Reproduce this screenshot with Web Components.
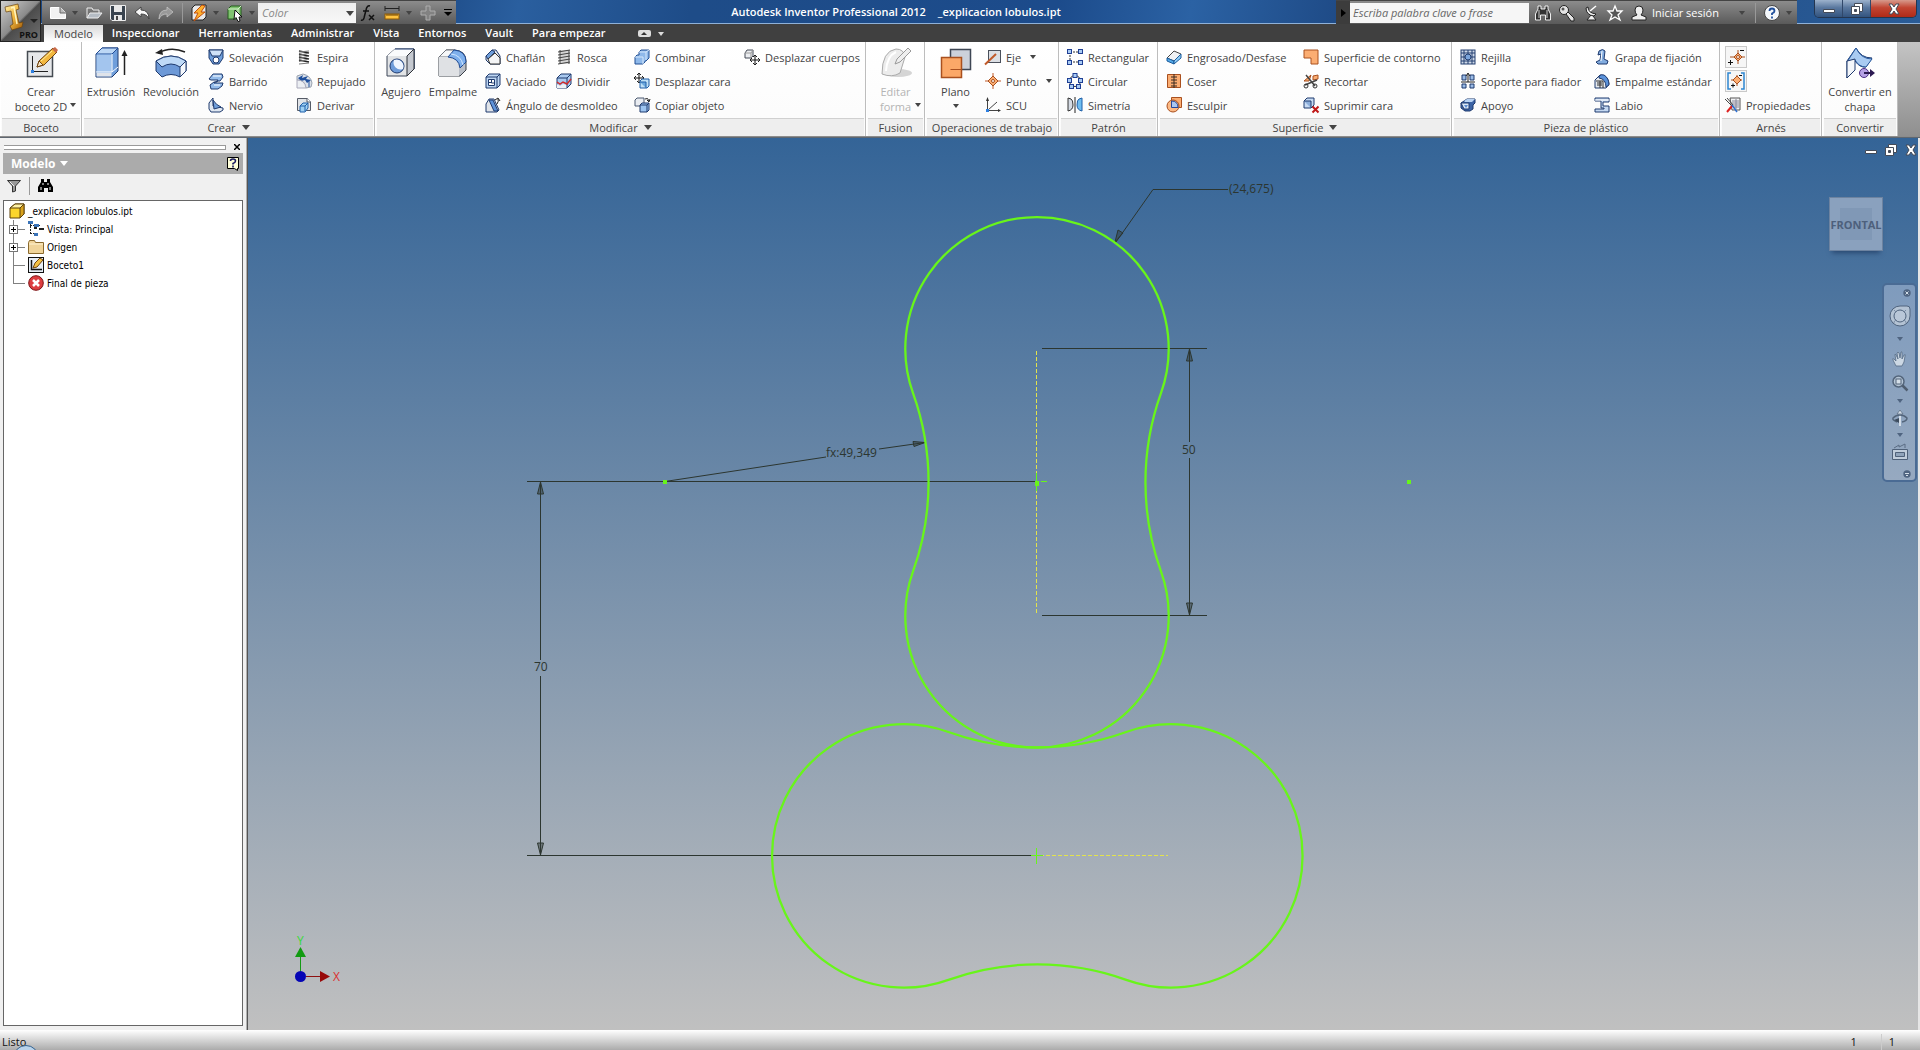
<!DOCTYPE html>
<html lang="es">
<head>
<meta charset="utf-8">
<title>Autodesk Inventor Professional 2012</title>
<style>
  html, body { height: 100%; margin: 0; }
  body { font: 11px/15px "Open Sans", "Noto Sans", sans-serif; color: #444; background: #f0f0f0; overflow: hidden; }
</style>
</head>
<body>
<inv-app></inv-app>
<script>
const B = 'stroke="#1f3a6e" stroke-linejoin="round"';
const O = 'fill="#fbad72" stroke="#a9501f" stroke-linejoin="round"';
const ARROW = 'fill="none" stroke="#222"';

/* name: [width, height, markup] */
const ICONS = {
  sketch: [32, 32, `<rect x="2.500" y="4.500" width="25" height="25" fill="#e6e8ea" stroke="#454b52" stroke-width="1.500"/><path d="M7.500 9v15.500H23" fill="none" stroke="#222"/><rect x="6" y="23" width="3" height="3" fill="#2d7fe0"/><path d="M12 20l2-6L28 1l4 4-13 13z" fill="#f2b83f" stroke="#6f4310"/><path d="M12 20l2-6 4 4z" fill="#f7e7c8" stroke="#6f4310"/><path d="M27 2l3-2 3 3-2 3z" fill="#c86b4a"/><path d="M16 14L27 4" stroke="#fff0a0"/>`],
  extrude: [32, 32, `<path d="M1 7l6-6h16v23l-6 6H1z" fill="#6f9edb" ${B}/><path d="M1 7l6-6h16l-6 6z" fill="#bcd7f5" stroke="#1f4a94"/><path d="M1.500 7.500h15v18h-15z" fill="#a3c5ee"/><path d="M17 7v18M1 25h16l6-5" fill="none" stroke="#fff"/><path d="M1.500 26h15v3.500h-15z" fill="#dfe3ea"/><path d="M29.500 28V6" stroke="#222" stroke-width="1.500"/><path d="M26.500 9l3-6 3 6z" fill="#222"/>`],
  revolve: [32, 32, `<path d="M3 6Q16-1 30 5" fill="none" stroke="#222" stroke-width="1.500"/><path d="M7 2L0 6l8 2z" fill="#222"/><path d="M1 14q15-10 30 0v10l-6 6q-9-5-18 0l-6-6z" fill="#6d99d7" ${B}/><path d="M1 14q15-10 30 0l-6 6q-9-6-18 0z" fill="#bfdaf7" ${B}/><path d="M25 20l6-6v10l-6 6z" fill="#f5f8fc" ${B}/>`],
  hole: [32, 32, `<path d="M2 9l8-7h19v20l-7 7H2z" fill="#e2e4e6" stroke="#3c4759" stroke-linejoin="round"/><path d="M2 9l8-7h19l-7 7z" fill="#fafbfc"/><path d="M10 2h19v20l-7 7" fill="none" ${B}/><path d="M22 9v20l7-7V2z" fill="#c5c9d0" stroke="#2d3138"/><circle cx="12" cy="19" r="7" fill="#6e9cda" ${B}/><path d="M9 13a7 7 0 0 0 9 9 7 7 0 0 0-9-9" fill="#eef5ff"/>`],
  fillet: [32, 32, `<path d="M2 10l7-7h9q11 1 11 11v9l-6 6H2z" fill="#b9bec6" stroke="#3b4048"/><path d="M2 10l7-7h9l-6 7z" fill="#f6f7f8" stroke="#70757d"/><path d="M2 10h10q10 1 10 11v8H2z" fill="#dfe1e4"/><path d="M11 10l6-7q12 1 12 12l-6 6q-1-10-12-11z" fill="#7fb0ec" stroke="#1f4a94"/><path d="M14 7q10 1 12 11" fill="none" stroke="#d0e6ff"/>`],
  form: [32, 32, `<ellipse cx="18" cy="26" rx="14" ry="4" fill="#d5d5d5"/><path d="M2 27Q2 4 16 2q8 0 9 8l-5 16q-8 5-18 1z" fill="#ececec" stroke="#aaa"/><path d="M6 24Q7 9 16 5" fill="none" stroke="#fff" stroke-width="2"/><path d="M15 17l2-5L28 1l3 3-11 11z" fill="#eee" stroke="#999"/>`],
  plane: [32, 32, `<rect x="10.500" y="2.500" width="20" height="20" fill="#ccd1da" stroke="#3e4654" stroke-width="1.500"/><rect x="1.500" y="10.500" width="20" height="20" fill="#fba868" stroke="#a9501f" stroke-width="1.500"/><path d="M10.500 22.500h11v-12" fill="none" stroke="#a9501f"/>`],
  convert: [32, 32, `<path d="M3 14L12 1q5 10 16 10l-6 9q-6 1-11-6l-8 17z" fill="#8db6e7" ${B}/><path d="M12 1q5 11 16 11l-6 8q-7 0-11-7-3 0-8 2z" fill="#a9cbf2" stroke="#2a5a9e"/><path d="M3 14l8-2v11l-8 8z" fill="#f4f7fb" ${B}/><circle cx="20" cy="26" r="4.500" fill="#b5a1e5" stroke="#4b2f86"/><path d="M20 26h7" stroke="#2c1a52" stroke-width="2"/><path d="M26 22l5 4-5 4z" fill="#2c1a52"/>`],

  loft: [16, 16, `<path d="M1 1h14v8l-4 6H5L1 9z" fill="#6f9fdb" ${B}/><path d="M1 1h14l-3 6H4z" fill="#cfe2f8" ${B}/><circle cx="8" cy="11" r="3" fill="#fff" ${B}/>`],
  sweep: [16, 16, `<path d="M1 6l4-5h9l1 3-3 4H9l-3 2 9 0-1 3-4 3H3l-1-4 4-3h3l1-2H3z" fill="#94bceb" ${B}/><path d="M5 3h8M6 12h6" stroke="#fff"/>`],
  rib: [16, 16, `<path d="M1 6l4-5v8l10 2v2l-3 2H3l-2-3z" fill="#dfe7f1" ${B}/><path d="M5 3q3 5 8 7l-7 2z" fill="#6f9fdb" ${B}/>`],
  coil: [16, 16, `<path d="M3 2l10 2M3 5l10 2M3 8l10 2M3 11l10 2" stroke="#222" stroke-width="1.500"/><path d="M3 3l10-1M3 6.500L13 4M3 9.500L13 7M3 12.500l10-2.500M3 15l10-1" stroke="#777"/>`],
  emboss: [16, 16, `<path d="M1 3l6-2q8 2 9 9l-1 4-5 1q-1-8-9-8z" fill="#dbe1e9" stroke="#9aa3b0"/><path d="M2 5l5-3-1 3 6-2-2 3 5 1-4 3-2-3-4 1-2-2z" fill="#1f4f9c"/><path d="M1 7q8 0 9 8H1z" fill="#eceff3" stroke="#aab"/><path d="M13 8v6" stroke="#1f4f9c"/>`],
  derive: [16, 16, `<path d="M1.500 1.500h10l3 3v9h-13z" fill="#e0e3e7" stroke="#555b66"/><path d="M11 1v4h4" fill="#fff" stroke="#555b66"/><path d="M4 9l3-3h5v5l-3 4H4z" fill="#9fd0f3" stroke="#1f5fa8"/><path d="M4 9h5v5M9 9l3-3" fill="none" stroke="#1f5fa8"/>`],
  chamfer: [16, 16, `<path d="M1 7l6-6h4l4 6v8H5L1 11z" fill="#e4e6e9" ${B}/><path d="M1 7l6-6 3 2-7 7z" fill="#6f9fdb" ${B}/><path d="M3 10l7-6 5 5v6H5z" fill="#f4f5f6" stroke="#333"/>`],
  shell: [16, 16, `<path d="M1 4l3-3h11v11l-3 3H1z" fill="#bcd5f2" ${B}/><path d="M1 4h11v11M12 4l3-3" fill="none" ${B}/><path d="M3.500 6.500h6v6h-6z" fill="#fff" ${B}/><path d="M6.500 7v3h3M4 9.500h3" fill="none" stroke="#1f3a6e"/>`],
  draft: [16, 16, `<path d="M1 7l3-5h5l5 11-2 2H1z" fill="#dfe3e9" ${B}/><path d="M4 3h4l5 11H9z" fill="#5f93d9" ${B}/><path d="M12 7q2-3 1-5M10 3l3-2 2 3" ${ARROW}/>`],
  thread: [16, 16, `<path d="M4 1h9v14H4z" fill="#d6d6d6"/><path d="M2 3l12-2M2 6l12-2M2 9l12-2M2 12l12-2M2 15l12-2M4 1v14M13 1v14" stroke="#444"/>`],
  split: [16, 16, `<path d="M1 5l4-4h10v10l-4 4H1z" fill="#a9c9ef" ${B}/><path d="M1 11l3 2 3-2 4 1v3H1z" fill="#eef2f6"/><path d="M1 5h10v10M11 5l4-4" fill="none" stroke="#1f3a6e"/><path d="M1 9l3 2 3-2 4 2 4-5" fill="none" stroke="#d12b2b" stroke-width="1.500"/>`],
  combine: [16, 16, `<path d="M5 3l2-2h8v8l-3 3h-1v1l-2 2H1V8l2-2h2z" fill="#8fb9ea" stroke="#214f93"/><path d="M5 3h7v8M12 3l3-2M1 8h8v7" fill="none" stroke="#d6e8fb"/>`],
  moveface: [16, 16, `<path d="M5 0v10M0 5h10" stroke="#111"/><path d="M3 2l2-2 2 2M3 8l2 2 2-2M2 3L0 5l2 2M8 3l2 2-2 2" ${ARROW}/><path d="M6 8l2-2h7v7l-2 2H6z" fill="#bfe0f6" stroke="#1f5fa8"/><path d="M6 9h6v6" fill="#6da9de" stroke="#1f5fa8"/>`],
  copyobj: [16, 16, `<path d="M1 3l2-2h7v6l-2 2H1z" fill="#e9ecf1" stroke="#4a5970"/><path d="M6 8l2-2h7v7l-2 2H6z" fill="#9cc4f0" ${B}/><path d="M6 8h7v7M13 8l2-2" fill="none" ${B}/><path d="M11 2q3-2 4 2M13 3l2 2 1-3" ${ARROW}/>`],
  movebody: [16, 16, `<path d="M1 4l2-3h6v6l-2 2H1z" fill="#eceef1" stroke="#444b57"/><path d="M1 4h6v5M7 4l2-3" fill="none" stroke="#999"/><path d="M11 6v10M6 11h10" stroke="#111"/><path d="M9 8l2-2 2 2M9 14l2 2 2-2M8 9l-2 2 2 2M14 9l2 2-2 2" ${ARROW}/>`],
  axis: [16, 16, `<rect x="3.500" y="1.500" width="12" height="12" fill="#dcdfe4" stroke="#4a505b"/><path d="M0 15.500L11 5" stroke="#c05a2a" stroke-width="2"/>`],
  point: [16, 16, `<path d="M8 0v16M0 8h16" stroke="#c05a2a"/><path d="M8 3l5 5-5 5-5-5z" ${O}/><circle cx="8" cy="8" r="1.500" fill="#fff" stroke="#a9501f"/>`],
  ucs: [16, 16, `<path d="M2.500 14V2M2 13.500h12M3 13L12 5" fill="none" stroke="#444"/><path d="M1 4l1.500-4L4 4zM13 12l3 1.500-3 1.500z" fill="#333"/><rect x="1" y="12" width="3" height="3" fill="#2d7fe0"/>`],
  rectpat: [16, 16, `<path d="M3 3h10M3 3v10M3 13h10" fill="none" stroke="#333" stroke-dasharray="2 1"/><g fill="#a9cbf4" stroke="#1f3f94"><rect x=".5" y=".5" width="4" height="4"/><rect x="11.500" y=".5" width="4" height="4"/><rect x=".5" y="11.500" width="4" height="4"/><rect x="11.500" y="11.500" width="4" height="4"/></g>`],
  circpat: [16, 16, `<circle cx="8" cy="8" r="5.500" fill="none" stroke="#333"/><g fill="#a9cbf4" stroke="#1f3f94"><rect x="6" y=".5" width="4" height="4"/><rect x=".5" y="5.500" width="4" height="4"/><rect x="11.500" y="5.500" width="4" height="4"/><rect x="2.500" y="11.500" width="4" height="4"/><rect x="9.500" y="11.500" width="4" height="4"/></g>`],
  mirror: [16, 16, `<path d="M1 1l3 1q2 1 2 6t-5 6z" fill="#d5dbe4" stroke="#333"/><path d="M15 1l-3 1q-2 1-2 6t5 6z" fill="#6fbdf0" stroke="#1f5fa8"/><path d="M8 0v16" stroke="#222"/>`],
  thicken: [16, 16, `<path d="M1 9l7-7 7 3-7 7z" fill="#f0f2f4" stroke="#444"/><path d="M1 9l7 3v3l-7-3z" fill="#53a9e8" stroke="#1d5c9c"/><path d="M8 12l7-7v4l-7 6z" fill="#8fcdf5" stroke="#1d5c9c"/>`],
  stitch: [16, 16, `<rect x="1.500" y="1.500" width="13" height="13" ${O}/><path d="M8 1v14M5 4h6M5 7h6M5 10h6M5 13h6" stroke="#3a2a20"/>`],
  sculpt: [16, 16, `<rect x="5.500" y=".5" width="10" height="10" ${O}/><circle cx="7" cy="9" r="6" fill="#fcb985" stroke="#a9501f"/><path d="M5.500 4v6.500H12Q12 4 5.500 4z" fill="#a9c6f2" stroke="#24479c"/>`],
  boundary: [16, 16, `<path d="M1 1h14v14H8V9H1z" ${O}/>`],
  trim: [16, 16, `<path d="M1 8l7-6-2 6zM10 3l5-1v4l-5 1z" ${O}/><path d="M3 2l9 11M14 7L2 12" stroke="#444" stroke-width="1.500"/><circle cx="3" cy="13" r="2" fill="none" stroke="#333"/><circle cx="12" cy="13" r="2" fill="none" stroke="#333"/>`],
  delface: [16, 16, `<path d="M1 4l3-3h7v7l-3 3H1z" fill="#c7dbf3" ${B}/><path d="M1 4h7v7" fill="#8caedb" ${B}/><path d="M9.500 9.500l6 6M15.500 9.500l-6 6" stroke="#c01818" stroke-width="2"/>`],
  grill: [16, 16, `<rect x="1" y="1" width="14" height="14" fill="#cfd9e8" stroke="#233e70"/><path d="M1 4h14M1 8h14M1 12h14M4 1v14M8 1v14M12 1v14" stroke="#233e70"/><circle cx="8" cy="8" r="3" fill="#7ba5dc" stroke="#233e70"/>`],
  boss: [16, 16, `<path d="M2 2h4v5H2zM10 2h4v5h-4zM2 11h4v4H2zM10 11h4v4h-4z" fill="#9abbe6" ${B}/><path d="M8 1v8M6 3l2-3 2 3M1 9h14" fill="none" stroke="#222"/>`],
  rest: [16, 16, `<path d="M4 4l3-2h8v4l-2 2v4l-3 2H5L1 11V6z" fill="#3c64a6" ${B}/><path d="M4 4l3-2h8l-3 3H5z" fill="#b8d2f2"/><path d="M1 6h8v6H4z" fill="#dbe8f7" ${B}/><path d="M4 8h4l-2 3z" fill="#5b8bd0"/>`],
  snap: [16, 16, `<path d="M5 2q4-3 6 0l-1 8 4 2-1 3H4l-2-2 4-2 1-6-3 1z" fill="#82acdf" ${B}/><path d="M8 2l-1 10" stroke="#fff"/>`],
  rule: [16, 16, `<path d="M1 7l5-5q8 0 9 9l-3 4H1z" fill="#e7ebf0" ${B}/><path d="M5 3q2-2 5-1 5 3 5 10l-3 2q0-8-7-9z" fill="#5b93db" ${B}/><path d="M2 8h7v7M3 10h5M3 12h5M6 8v7" fill="none" stroke="#333"/>`],
  lip: [16, 16, `<path d="M1 1h14v4H9v4h6v6H1v-3h9v-1H7V4H1z" fill="#c4d8f1" ${B}/><path d="M1 3h14" stroke="#fff"/>`],
  pinadd: [18, 18, `<path d="M11 2v14M3 9h15" stroke="#a9501f"/><path d="M11 5l4 4-4 4-4-4z" ${O}/><circle cx="11" cy="9" r="1.500" fill="#fff" stroke="#a9501f"/><path d="M1 14.500h5M3.500 12v5M13 2.500h4" stroke="#111"/>`],
  pingroup: [18, 18, `<path d="M4 1H1v16h3M14 1h3v16h-3" fill="none" stroke="#2e86d1" stroke-width="1.500"/><path d="M10 3v11M4 8h11" stroke="#a9501f"/><path d="M10 4l4 4-4 4-4-4z" ${O}/><path d="M4 13.500h4M6 11.500v4M12 3.500h3" stroke="#111"/>`],
  props: [16, 16, `<path d="M5 1h10v12H7z" fill="#f2f3f5" stroke="#555"/><path d="M7 4h7M7 6h7M8 8h6M9 10h5M11 2v10" stroke="#889"/><path d="M0 2l9 9M2 1l6 7" stroke="#444"/><path d="M2 15l5-6" stroke="#d22" stroke-width="2"/><path d="M7 8l5 7" stroke="#2d6fd0" stroke-width="1.500"/>`],

  logo: [39, 40, `<defs><linearGradient id="g" x1="0" y1="0" x2="1" y2="1"><stop offset="0" stop-color="#fff0a8"/><stop offset=".5" stop-color="#f0b53c"/><stop offset="1" stop-color="#a05a08"/></linearGradient></defs><path d="M4 6l13-3 1 5-3 1 3 13 4-1-1 5-10 3-2-4 3-2-2-13-5 1z" fill="url(#g)" stroke="#6a4310" stroke-width=".7"/><path d="M10 7l3-1 3 17" fill="none" stroke="#fff5bf" stroke-width="1.500"/><path d="M29 18h8l-4 4z" fill="#222"/>`],
  new: [16, 16, `<path d="M.5 2.500h10l5 5v6H.500z" fill="#f2f2f2" stroke="#fff"/><path d="M10 2v6h6" fill="#bbb" stroke="#666"/>`],
  open: [16, 16, `<path d="M1 13V3h5l1 2h6v3" fill="none" stroke="#eee"/><path d="M1 13L4 8h12l-4 5z" fill="#b5bcc4" stroke="#eee"/>`],
  save: [16, 16, `<path d="M.5.500h15v15H2l-1.500-1.500z" fill="#39434e" stroke="#eee"/><path d="M4 1h8v6H4zM4 10h8v5H4z" fill="#e8e8e8"/><path d="M6 11h2v4H6z" fill="#444"/>`],
  undo: [16, 16, `<path d="M1 7l6-5v3q8 0 8 9-2-5-8-5v3z" fill="#f7f7f7" stroke="#444"/>`],
  redo: [16, 16, `<path d="M15 7L9 2v3q-8 0-8 9 2-5 8-5v3z" fill="#999" stroke="#ccc" stroke-width=".7"/>`],
  update: [16, 16, `<path d="M1 3l3-3h11v12l-3 3H1z" fill="#e9e9e9" stroke="#222"/><path d="M11 0L3 8h4l-4 8L14 7h-4l4-6z" fill="#ffb02e" stroke="#c2500c"/>`],
  select: [16, 16, `<path d="M1 4l3-3h10v10l-3 3H1z" fill="#7fc36f" stroke="#245c1c"/><path d="M1 4h10v10M11 4l3-3" fill="none" stroke="#d8f2d0"/><path d="M8 5l7 7h-3l1 4-2 .5-2-4-2 2z" fill="#fff" stroke="#111"/>`],
  fx: [16, 16, `<path d="M10 1q-3-1-4 4L4 13q-1 3-3 2M3 6h6" fill="none" stroke="#111" stroke-width="1.500"/><path d="M9 10l5 5M14 10l-5 5" stroke="#111" stroke-width="1.500"/>`],
  measure: [16, 16, `<path d="M1 1v5M15 1v5M1 3.500h14" stroke="#222" fill="none"/><rect x="1" y="9" width="14" height="5" fill="#ffc340" stroke="#8d5a06"/><path d="M3 9v2M5 9v2M7 9v2M9 9v2M11 9v2M13 9v2" stroke="#6a4000"/>`],
  plus: [16, 16, `<path d="M6 1h4v5h5v4h-5v5H6v-5H1V6h5z" fill="#828282" stroke="#adadad"/>`],
  custom: [8, 8, `<path d="M0 0h8v1H0zM0 3h8L4 7z" fill="#000"/>`],
  binoculars: [16, 16, `<path d="M3 1h3v3h4V1h3v3l2.500 5v6h-5v-5h-5v5h-5V9L3 4z" fill="#333" stroke="#fff" stroke-width=".9"/><path d="M4 5v8M12 5v8" stroke="#ccc"/>`],
  find: [16, 16, `<path d="M3 1h3v3h3V1h3v3l3 5v5h-5v-4H6v4H0V9l3-5z" fill="#000"/><path d="M3 9v3M12 9v3M5 5v2M10 5v2" stroke="#fff"/>`],
  key: [16, 16, `<circle cx="5" cy="5" r="4.500" fill="#e4e4e4" stroke="#222"/><path d="M7 9l2-2 6 6v3h-3z" fill="#e4e4e4" stroke="#222"/><circle cx="4" cy="4" r="1.500" fill="#555"/>`],
  satellite: [16, 16, `<path d="M3 3q0 7 8 8l2-2Q5 8 5 2zM8 10l-4 5h9l-3-4" fill="#eee" stroke="#222"/><path d="M7 6l6-5" stroke="#fff" stroke-width="1.500"/>`],
  star: [16, 16, `<path d="M8 1l2 5h5l-4 4 2 5-5-3-5 3 2-5-4-4h5z" fill="#555" stroke="#fff" stroke-width="1.300"/>`],
  user: [16, 16, `<path d="M8 1q4 0 4 4 0 3-2 5l5 2v3H1v-3l5-2Q4 8 4 5q0-4 4-4z" fill="#eee" stroke="#222"/>`],
  help: [16, 16, `<circle cx="8" cy="8" r="7.500" fill="#f4f7fb" stroke="#444"/><path d="M5.500 6q0-2.500 2.500-2.500T10.500 6Q10.500 7.500 8 8.500V10M8 11.500v2" fill="none" stroke="#1f4f9c" stroke-width="1.800"/>`],
  qmark: [14, 15, `<path d="M1.500 1.500h11v11h-1v2l-3-2h-7z" fill="#ffffd8" stroke="#000"/><path d="M4.500 5q0-2 2.500-2t2.500 2Q9.500 6.500 7 7.500V8.500M7 9.500v2" fill="none" stroke="#1a1a60" stroke-width="1.600"/>`],
  funnel: [14, 14, `<path d="M.5 1.500h13L8.500 7v5l-3 1V7z" fill="#999" stroke="#333"/><path d="M3 3l4 4" stroke="#eee"/>`],
  part: [16, 16, `<path d="M1 5l5-4h9v10l-4 4H1z" fill="#fbd52c" stroke="#5e430b"/><path d="M1 5l5-4h9l-4 4z" fill="#fff2a5" stroke="#5e430b"/><path d="M11 5v10l4-4V1z" fill="#d9a21c" stroke="#5e430b"/>`],
  view: [16, 16, `<path d="M2.500 2v11M2 4.500h4M2 12.500h5M10 4.500h3" stroke="#222" stroke-dasharray="2 1"/><path d="M0 0h5v3H0zM6 3h5v3H6zM6 12h4v3H6z" fill="#3a73b8"/><path d="M11 7h5v2h-5zM6 6h3v2H6z" fill="#222"/>`],
  folder: [16, 16, `<path d="M.5 3.500l1-2h5l1 2h8v11H.500z" fill="#f0d49a" stroke="#8b6a2e"/><path d="M1 5h14" stroke="#fff3d2"/>`],
  sketchnode: [16, 16, `<rect x=".5" y=".5" width="15" height="15" fill="#e7eef6" stroke="#111"/><path d="M3.500 3v9.500H14" fill="none" stroke="#111" stroke-width="1.500"/><path d="M5 11l2-5 5-5 3 2-6 7z" fill="#f4c042" stroke="#6f4310"/>`],
  end: [16, 16, `<circle cx="8" cy="8" r="7.300" fill="#dc3d40" stroke="#7c1214"/><path d="M5 5l6 6M11 5l-6 6" stroke="#fff" stroke-width="2.500"/>`],

  wheel: [22, 22, `<path d="M1 11A10 10 0 0 1 11 1h7q3 0 3 3v7A10 10 0 0 1 1 11z" fill="#b4c3d4" stroke="#50647e"/><path d="M7 15q-3 2-2 3M15 15q3 2 2 3M7 7L5 5M15 7l2-2" fill="none" stroke="#7b8da5"/><circle cx="11" cy="11" r="6" fill="#b9c7d8" stroke="#50647e"/>`],
  hand: [16, 16, `<path d="M4 15L1 9q-1-2 1-1l2 2-1-6q0-2 1 0l2 4-1-6q1-2 2 0l1 5 1-6q1-1 1 1v6l2-4q2-1 1 1l-1 6-2 4z" fill="#ccd8e4" stroke="#566b84" stroke-width=".8"/>`],
  zoom: [16, 16, `<circle cx="6.500" cy="6.500" r="5.500" fill="#b5c5d5" stroke="#53657b" stroke-width="1.500"/><rect x="4" y="4" width="5" height="5" fill="#d5dfe8" stroke="#53657b"/><path d="M10.500 10.500l5 5" stroke="#4f5e70" stroke-width="2.500"/>`],
  orbit: [16, 16, `<path d="M8 16V3" stroke="#d3dde8" stroke-width="2"/><path d="M5 4l3-4 3 4z" fill="#d3dde8" stroke="#53657b" stroke-width=".7"/><path d="M5 12Q0 10 1 8q3-3 7-3t7 3q0 3-5 4" fill="none" stroke="#53657b" stroke-width="1.500"/><path d="M2 10l5-2v5z" fill="#3d4c5e"/>`],
  camera: [16, 16, `<path d="M.5 5.500h15v10H.500z" fill="#c0cddb" stroke="#4f6179"/><path d="M3.500 8.500h9v4h-9z" fill="#8fa3ba" stroke="#4f6179"/><path d="M2 4l5-3v2l6-3v4" fill="none" stroke="#5b6d84"/>`],
  dotx: [8, 8, `<circle cx="4" cy="4" r="3.700" fill="#4f6480"/><path d="M2.500 2.500l3 3M5.500 2.500l-3 3" stroke="#d5dfe8"/>`],
  dotmenu: [8, 8, `<circle cx="4" cy="4" r="3.700" fill="#4f6480"/><path d="M2 3.500h4M3 5.500h2" stroke="#d5dfe8"/>`],
  wmin: [12, 12, `<path d="M.5 6.500h11v3H.500z" fill="#fff" stroke="#444b58"/>`],
  wmax: [12, 12, `<path d="M3.500.5h8v8h-8z" fill="#fff" stroke="#444b58"/><path d="M.5 3.500h8v8h-8z" fill="#fff" stroke="#444b58"/><path d="M3.500 6.500h2v2h-2z" fill="#444b58" stroke="#444b58"/>`],
  wclose: [12, 12, `<path d="M1 1h3l2 3 2-3h3L8 6l3 5H8L6 8l-2 3H1l3-5z" fill="#fff" stroke="#444b58"/>`]
};

function define(name, css, html) {
  customElements.define(name, class extends HTMLElement {
    constructor() {
      super();
      this.attachShadow({ mode: 'open' });
    }
    connectedCallback() {
      if (this.shadowRoot.childNodes.length) return;
      const markup = typeof html === 'function' ? html(this) : html;
      this.shadowRoot.innerHTML = `<style>${css}</style>${markup}`;
    }
  });
}

define('inv-icon', ':host{display:inline-flex;flex:none} svg{display:block;overflow:visible}', el => {
  const [w, h, body] = ICONS[el.getAttribute('name')];
  return `<svg width="${w}" height="${h}" viewBox="0 0 ${w} ${h}" aria-hidden="true">${body}</svg>`;
});

define('inv-caret', `
  :host{display:inline-block;flex:none;width:0;height:0;border:3px solid transparent;border-top:4px solid var(--caret,#444);border-bottom:0}
  :host([large]){border-width:5px 4px 0}`, '');

/* Ribbon command: small row (icon beside text) or large (icon above text) */
define('inv-command', `
  :host{display:flex}
  button{all:unset;display:flex;align-items:center;gap:5px;height:24px;white-space:nowrap;color:#444}
  :host([large]){justify-content:center}
  :host([large]) button{flex-direction:column;gap:5px;height:auto;text-align:center;position:relative}
  :host([disabled]) button{color:#b4b4b4}
  .menu{margin-left:4px}
  :host([large][wrap]) .menu{position:absolute;right:-9px;bottom:11px}
  :host([large]:not([wrap])) .menu{margin:0}
  :host([toggle]) button{box-sizing:border-box;width:22px;height:22px;margin:1px 0;justify-content:center;border:1px solid #c9c9c9;background:#f6f6f6}
`, el => `<button type="button" ${el.hasAttribute('toggle') ? `aria-label="${el.getAttribute('toggle')}"` : ''}><inv-icon name="${el.getAttribute('icon')}"></inv-icon>${el.hasAttribute('toggle') ? '' : '<span><slot></slot></span>'}${el.hasAttribute('menu') ? '<inv-caret class="menu"></inv-caret>' : ''}</button>`);

define('inv-panel', `
  :host{display:flex;flex-direction:column;box-sizing:border-box;border-right:1px solid #bdbdbd;border-left:1px solid #fff;background:linear-gradient(#fff,#fbfbfb)}
  .body{display:flex;height:76px;padding:3px 0 0;box-sizing:border-box}
  footer{display:flex;align-items:center;justify-content:center;gap:6px;height:17px;border-top:1px solid #d0d0d0;background:#eeeeee;margin:0 1px;white-space:nowrap}
`, el => `<div class="body"><slot></slot></div><footer>${el.getAttribute('label')}${el.hasAttribute('menu') ? '<inv-caret large></inv-caret>' : ''}</footer>`);

define('inv-ribbon', `
  :host{display:flex;height:94px;background:linear-gradient(#c4c4c4,#8f8f8f);border-bottom:1px solid #8c8c8c}
  .col{display:flex;flex-direction:column}
  .sub{display:grid;grid-template-columns:71px auto}
  .big{margin-top:2px}
  .boceto{width:82px}.crear{width:293px}.modificar{width:491px}.fusion{width:59px}.trabajo{width:134px}
  .patron{width:99px}.superficie{width:294px}.pieza{width:268px}.arnes{width:102px}.convertir{width:76px}
`, `
  <inv-panel class="boceto" label="Boceto"><inv-command class="big" style="width:80px" large wrap menu icon="sketch">Crear<br>boceto 2D</inv-command></inv-panel>
  <inv-panel class="crear" label="Crear" menu>
    <inv-command class="big" style="width:56px" large icon="extrude">Extrusión</inv-command>
    <inv-command class="big" style="width:64px" large icon="revolve">Revolución</inv-command>
    <div class="col" style="width:88px;padding-left:5px"><inv-command icon="loft">Solevación</inv-command><inv-command icon="sweep">Barrido</inv-command><inv-command icon="rib">Nervio</inv-command></div>
    <div class="col"><inv-command icon="coil">Espira</inv-command><inv-command icon="emboss">Repujado</inv-command><inv-command icon="derive">Derivar</inv-command></div>
  </inv-panel>
  <inv-panel class="modificar" label="Modificar" menu>
    <inv-command class="big" style="width:50px" large icon="hole">Agujero</inv-command>
    <inv-command class="big" style="width:54px" large icon="fillet">Empalme</inv-command>
    <div class="col" style="width:149px;padding-left:5px"><div class="sub"><inv-command icon="chamfer">Chaflán</inv-command><inv-command icon="thread">Rosca</inv-command><inv-command icon="shell">Vaciado</inv-command><inv-command icon="split">Dividir</inv-command></div><inv-command icon="draft">Ángulo de desmoldeo</inv-command></div>
    <div class="col" style="width:110px"><inv-command icon="combine">Combinar</inv-command><inv-command icon="moveface">Desplazar cara</inv-command><inv-command icon="copyobj">Copiar objeto</inv-command></div>
    <div class="col"><inv-command icon="movebody">Desplazar cuerpos</inv-command></div>
  </inv-panel>
  <inv-panel class="fusion" label="Fusion"><inv-command class="big" style="width:57px" large wrap disabled menu icon="form">Editar<br>forma</inv-command></inv-panel>
  <inv-panel class="trabajo" label="Operaciones de trabajo">
    <inv-command class="big" style="width:59px" large menu icon="plane">Plano</inv-command>
    <div class="col"><inv-command menu icon="axis">Eje</inv-command><inv-command menu icon="point">Punto</inv-command><inv-command icon="ucs">SCU</inv-command></div>
  </inv-panel>
  <inv-panel class="patron" label="Patrón"><div class="col" style="padding-left:7px"><inv-command icon="rectpat">Rectangular</inv-command><inv-command icon="circpat">Circular</inv-command><inv-command icon="mirror">Simetría</inv-command></div></inv-panel>
  <inv-panel class="superficie" label="Superficie" menu>
    <div class="col" style="width:137px;padding-left:7px"><inv-command icon="thicken">Engrosado/Desfase</inv-command><inv-command icon="stitch">Coser</inv-command><inv-command icon="sculpt">Esculpir</inv-command></div>
    <div class="col"><inv-command icon="boundary">Superficie de contorno</inv-command><inv-command icon="trim">Recortar</inv-command><inv-command icon="delface">Suprimir cara</inv-command></div>
  </inv-panel>
  <inv-panel class="pieza" label="Pieza de plástico">
    <div class="col" style="width:134px;padding-left:7px"><inv-command icon="grill">Rejilla</inv-command><inv-command icon="boss">Soporte para fiador</inv-command><inv-command icon="rest">Apoyo</inv-command></div>
    <div class="col"><inv-command icon="snap">Grapa de fijación</inv-command><inv-command icon="rule">Empalme estándar</inv-command><inv-command icon="lip">Labio</inv-command></div>
  </inv-panel>
  <inv-panel class="arnes" label="Arnés"><div class="col" style="padding-left:4px"><inv-command toggle="Colocar pasador" icon="pinadd"></inv-command><inv-command toggle="Colocar grupo de pasadores" icon="pingroup"></inv-command><inv-command icon="props">Propiedades</inv-command></div></inv-panel>
  <inv-panel class="convertir" label="Convertir"><inv-command class="big" style="width:74px" large icon="convert">Convertir en<br>chapa</inv-command></inv-panel>
`);

define('inv-tabs', `
  :host{display:flex;height:18px;padding-left:44px;background:#404040}
  button{all:unset;padding:0 10px 0 9px;line-height:18px;color:#fff;font-weight:600;white-space:nowrap}
  button[aria-selected=true]{background:linear-gradient(#d9d9d9,#fff);color:#444;margin:1px 0 0;padding:0 10px;line-height:17px;font-weight:400}
  .pill{display:flex;align-items:center;justify-content:center;padding:0;width:13px;height:7px;margin:6px 7px 0 22px;border-radius:2px;background:#dedede}
  .pill i{border:3px solid transparent;border-bottom:3px solid #333;border-top:0}
  inv-caret{--caret:#ddd;margin-top:8px}
  div{display:flex}
`, `<div role="tablist">${['Modelo', 'Inspeccionar', 'Herramientas', 'Administrar', 'Vista', 'Entornos', 'Vault', 'Para empezar'].map((t, i) => `<button type="button" role="tab" aria-selected="${i === 0}">${t}</button>`).join('')}</div><button class="pill" type="button" aria-label="Minimizar cinta"><i></i></button><inv-caret></inv-caret>`);

define('inv-titlebar', `
  :host{display:flex;align-items:flex-start;height:24px;box-sizing:border-box;color:#fff;border-bottom:1px solid #8fb1d8;background:linear-gradient(100deg,#1d4a86 22%,#2a5f9f 27%,#1e4c88 36%,#1c4b8b 55%,#2b62a4 62%,#1b447e 72%,#2a5c97)}
  button{all:unset;display:flex}
  .app{box-sizing:border-box;position:relative;z-index:1;width:41px;height:42px;margin-right:1px;background:linear-gradient(135deg,#d0d0d0,#8a8a8a 48%,#4c4c4c 52%,#707070);border:1px solid #222}
  .app span{position:absolute;right:2px;bottom:0;font-size:9px;line-height:13px;color:#111;font-weight:700}
  .bar{display:flex;align-items:center;height:24px;box-sizing:border-box;background:linear-gradient(#8c8c8c,#5a5a5a);border-top:1px solid #444}
  .qat{box-sizing:border-box;padding:0 4px 0 8px;gap:8px;width:414px}
  .qat button{align-items:center;gap:6px}
  .sep{width:1px;height:20px;background:#999}
  select{appearance:none;font:italic 11px "Open Sans",sans-serif;color:#888;width:98px;height:20px;border:0;border-radius:0;padding:0 4px;background:linear-gradient(#eee,#f8f8f8);margin:0}
  .combo{position:relative;display:flex;margin:0 -4px 0 -5px}
  .combo inv-caret{position:absolute;right:2px;top:8px}
  h1{flex:1;margin:0;font-size:11px;font-weight:600;line-height:23px;display:flex;justify-content:center;gap:12px;white-space:nowrap}
  .info{width:461px}
  .toggle{width:14px;height:23px;align-items:center;justify-content:center;background:#3c3c3c}
  .toggle i{border:4px solid transparent;border-left:5px solid #000;border-right:0}
  input{box-sizing:border-box;width:179px;height:20px;border:0;padding:0 3px;background:#f6f6f6;font:italic 11px "Open Sans",sans-serif;color:#666;margin-right:6px}
  input::placeholder{color:#666;opacity:1}
  .icons{display:flex;gap:8px;align-items:center}
  .sign{gap:5px;margin-left:8px;align-items:center;white-space:nowrap}
  .win{display:flex;width:103px;height:18px;margin:0 3px 0 17px;border:1px solid #243650;border-top:0;border-radius:0 0 5px 5px;overflow:hidden;box-sizing:border-box}
  .win button{flex:28;justify-content:center;align-items:center;border-right:1px solid #31486a;background:linear-gradient(#9db2cc,#5a789f 45%,#33547f)}
  .win .x{flex:46;border:0;background:linear-gradient(#d79a8c,#c24532 45%,#b02a17)}
`, `
  <button class="app" type="button" aria-label="Menú de la aplicación"><inv-icon name="logo"></inv-icon><span>PRO</span></button>
  <div class="bar qat">
    <button type="button" aria-label="Nuevo"><inv-icon name="new"></inv-icon><inv-caret></inv-caret></button>
    <button type="button" aria-label="Abrir"><inv-icon name="open"></inv-icon></button>
    <button type="button" aria-label="Guardar"><inv-icon name="save"></inv-icon></button>
    <button type="button" aria-label="Deshacer"><inv-icon name="undo"></inv-icon></button>
    <button type="button" aria-label="Rehacer"><inv-icon name="redo"></inv-icon></button>
    <span class="sep"></span>
    <button type="button" aria-label="Actualizar"><inv-icon name="update"></inv-icon><inv-caret></inv-caret></button>
    <button type="button" aria-label="Seleccionar"><inv-icon name="select"></inv-icon><inv-caret></inv-caret></button>
    <span class="combo"><select aria-label="Color"><option>Color</option></select><inv-caret large></inv-caret></span>
    <button type="button" aria-label="Parámetros"><inv-icon name="fx"></inv-icon></button>
    <button type="button" aria-label="Medir"><inv-icon name="measure"></inv-icon><inv-caret></inv-caret></button>
    <button type="button" aria-label="Añadir"><inv-icon name="plus"></inv-icon></button>
    <button type="button" aria-label="Personalizar"><inv-icon name="custom"></inv-icon></button>
  </div>
  <h1><span>Autodesk Inventor Professional 2012</span><span>_explicacion lobulos.ipt</span></h1>
  <div class="bar info">
    <button class="toggle" type="button" aria-label="Contraer"><i></i></button>
    <input type="text" aria-label="Buscar" placeholder="Escriba palabra clave o frase">
    <div class="icons"><inv-icon name="binoculars"></inv-icon><inv-icon name="key"></inv-icon><inv-icon name="satellite"></inv-icon><inv-icon name="star"></inv-icon></div>
    <button class="sign" type="button"><inv-icon name="user"></inv-icon>Iniciar sesión</button>
    <inv-caret style="margin:0 10px 0 20px"></inv-caret><span class="sep"></span>
    <button type="button" aria-label="Ayuda" style="gap:6px;align-items:center;margin-left:8px"><inv-icon name="help"></inv-icon><inv-caret></inv-caret></button>
  </div>
  <div class="win"><button type="button" aria-label="Minimizar"><inv-icon name="wmin"></inv-icon></button><button type="button" aria-label="Restaurar"><inv-icon name="wmax"></inv-icon></button><button class="x" type="button" aria-label="Cerrar"><inv-icon name="wclose"></inv-icon></button></div>
`);

define('inv-node', `
  :host{display:flex;align-items:center;height:18px;gap:3px;white-space:nowrap}
  .branch{position:relative;flex:none;width:16px;height:18px;background:linear-gradient(#808080,#808080) 4px 0/1px 100% no-repeat,linear-gradient(#808080,#808080) 4px 9px/12px 1px no-repeat}
  :host([last]) .branch{background-size:1px 9px,12px 1px}
  .branch i{position:absolute;left:0;top:5px;width:9px;height:9px;box-sizing:border-box;border:1px solid #777;background:linear-gradient(#000,#000) 1px 3px/5px 1px no-repeat,linear-gradient(#000,#000) 3px 1px/1px 5px no-repeat,#fff}
`, el => `${el.hasAttribute('root') ? '' : `<span class="branch">${el.hasAttribute('closed') ? '<i></i>' : ''}</span>`}<inv-icon name="${el.getAttribute('icon')}"></inv-icon><span><slot></slot></span>`);

define('inv-browser', `
  :host{display:flex;flex-direction:column;box-sizing:border-box;width:247px;padding:3px 3px 4px 3px;background:#f0f0f0;border-right:1px solid #b0b0b0;color:#000;font:10px/15px "DejaVu Sans Condensed","Open Sans",sans-serif}
  button{all:unset;display:flex}
  .grip{display:flex;align-items:center;gap:8px;height:12px}
  .grip span{flex:1;height:5px;box-sizing:border-box;border:1px solid #999;border-left:0;margin-left:1px;background:#fff}
  .grip svg{margin-right:3px}
  .head{display:flex;align-items:center;justify-content:space-between;height:21px;background:#ababab;padding:0 3px 0 8px}
  h2{display:flex;align-items:center;gap:4px;margin:0;color:#fff;font:700 12px/20px "Open Sans",sans-serif}
  h2 inv-caret{--caret:#fff}
  .tools{display:flex;align-items:center;gap:8px;height:24px;padding:0 4px}
  .tools i{width:1px;height:18px;background:#999}
  .tree{flex:1;border:1px solid #666;background:#fff;padding:1px 4px 1px 5px;margin-top:2px}
`, `
  <div class="grip"><span></span><button type="button" aria-label="Cerrar panel"><svg width="6" height="6"><path d="M0 0l6 6M6 0L0 6" stroke="#000" stroke-width="1.500"/></svg></button></div>
  <div class="head"><h2>Modelo <inv-caret large></inv-caret></h2><button type="button" aria-label="Ayuda"><inv-icon name="qmark"></inv-icon></button></div>
  <div class="tools"><button type="button" aria-label="Filtro"><inv-icon name="funnel"></inv-icon></button><i></i><button type="button" aria-label="Buscar"><inv-icon name="find"></inv-icon></button></div>
  <div class="tree"><inv-node root icon="part">_explicacion lobulos.ipt</inv-node><inv-node closed icon="view">Vista: Principal</inv-node><inv-node closed icon="folder">Origen</inv-node><inv-node icon="sketchnode">Boceto1</inv-node><inv-node last icon="end">Final de pieza</inv-node></div>
`);

define('inv-navbar', `
  :host{display:flex;flex-direction:column;align-items:center;box-sizing:border-box;width:35px;height:199px;padding:4px 0;border:2px solid #4a6b94;border-radius:5px;background:linear-gradient(#7f9bbd,#96a9c0);--caret:#4f6480}
  button{all:unset;display:flex}
  .end{align-self:flex-end;margin-right:4px}
  hr{width:26px;height:1px;border:0;background:#58708f;margin:4px 0 6px}
`, `
  <button class="end" aria-label="Cerrar"><inv-icon name="dotx"></inv-icon></button>
  <button style="margin:8px 0 10px" aria-label="Rueda"><inv-icon name="wheel"></inv-icon></button><inv-caret></inv-caret><hr>
  <button aria-label="Encuadre"><inv-icon name="hand"></inv-icon></button>
  <button style="margin:8px 0" aria-label="Zoom"><inv-icon name="zoom"></inv-icon></button><inv-caret></inv-caret>
  <button style="margin:7px 0" aria-label="Órbita"><inv-icon name="orbit"></inv-icon></button><inv-caret></inv-caret>
  <button style="margin:7px 0 10px" aria-label="Mirar a"><inv-icon name="camera"></inv-icon></button>
  <button class="end" aria-label="Opciones"><inv-icon name="dotmenu"></inv-icon></button>
`);

define('inv-canvas', `
  :host{display:block;position:relative;flex:1;min-width:0;border-left:1px solid #555;border-right:2px solid #e6e6e6;background:linear-gradient(#346497,#c0c0c0)}
  .sheet{display:block;width:100%;height:100%}
  text{font:12px "Open Sans",sans-serif;fill:#2c3630}
  .win{position:absolute;top:6px;right:1px;display:flex;gap:8px}
  .win button{all:unset;display:flex}
  .cube{all:unset;position:absolute;top:59px;right:35px;box-sizing:border-box;width:54px;height:54px;display:flex;align-items:center;justify-content:center;border:1px solid #6d83a0;background:#8098b6;color:#4d607c;font-weight:700;box-shadow:inset 0 0 0 10px #8aa1be,0 5px 5px -3px #29476f}
  inv-navbar{position:absolute;top:145px;right:1px}
`, `
  <svg class="sheet" viewBox="248 138 1670 892" preserveAspectRatio="xMidYMid meet" role="img" aria-label="Boceto">
    <g fill="none" stroke="#2c3630">
      <path d="M527 481.500H1035M527 855.500H1034M540.500 483V660M540.500 676V854M1042 348.500H1207M1042 615.500H1207M1189.500 350V442M1189.500 458V614"/>
      <path d="M665 481.500L826 457M879 449L925 442.500M1116 242L1153 189.500H1228"/>
      <path d="M540.500 482l-3 12h6zM540.500 855l-3-12h6zM1189.500 349l-3 12h6zM1189.500 615l-3-12h6zM925 442.500l-12-1 1 5zM1115 242l3-12 5 3z" fill="#2c3630" fill-opacity=".45"/>
    </g>
    <g fill="none" stroke="#e3e34b" stroke-dasharray="4 2"><path d="M1036.500 351V615"/><path d="M1040 855.500H1168"/></g>
    <g fill="none" stroke="#68f51a" stroke-width="2.300">
      <path d="M913.100 393.400A131.700 131.700 0 1 1 1160.900 393.400A263.300 263.300 0 0 0 1160.900 571.200A131.700 131.700 0 1 1 913.100 571.200A263.300 263.300 0 0 0 913.100 393.400Z"/>
      <path d="M1126.200 732A131.700 131.700 0 1 1 1126.200 979.800A263.300 263.300 0 0 0 948.400 979.800A131.700 131.700 0 1 1 948.400 732A263.300 263.300 0 0 0 1126.200 732Z"/>
    </g>
    <g fill="#68f51a"><rect x="663" y="480" width="4" height="4"/><rect x="1407" y="480" width="4" height="4"/><rect x="1035" y="481" width="4" height="5"/></g>
    <path d="M1036.500 473v18M1041 481.500h6M1036.500 848v16M1031 855.500h12" stroke="#68f51a"/>
    <text x="826" y="457">fx:49,349</text><text x="1229" y="193">(24,675)</text><text x="1182" y="454">50</text><text x="534" y="671">70</text>
    <path d="M300.500 972V955" stroke="#159a15"/><path d="M306 976.500H322" stroke="#8e1111"/>
    <path d="M295 957l5.500-10 5.500 10z" fill="#119b11"/><path d="M320 971l10 5.500-10 5.500z" fill="#980909"/><circle cx="300.500" cy="976.500" r="5.500" fill="#0505b5"/>
    <text x="297" y="945" style="fill:#37dc37">Y</text><text x="333" y="981" style="fill:#dc3030">X</text>
  </svg>
  <div class="win"><button aria-label="Minimizar documento"><inv-icon name="wmin"></inv-icon></button><button aria-label="Restaurar documento"><inv-icon name="wmax"></inv-icon></button><button aria-label="Cerrar documento"><inv-icon name="wclose"></inv-icon></button></div>
  <button class="cube">FRONTAL</button>
  <inv-navbar></inv-navbar>
`);

define('inv-status', `
  :host{display:flex;align-items:center;height:20px;padding:4px 25px 0 2px;box-sizing:border-box;background:linear-gradient(#fff,#ababab);color:#111;position:relative;overflow:hidden;font:11px/16px "Open Sans",sans-serif}
  .msg{flex:1}
  .num{padding:0 7px}
  .num+.num{border-left:1px solid #ccc;padding-left:7px;margin-left:17px;padding-right:0}
  .orb{position:absolute;left:13px;top:15px;width:26px;height:26px;box-sizing:border-box;border:1px solid #34628f;border-radius:50%;background:#b9d3ea}
`, `<span class="msg">Listo</span><span class="num">1</span><span class="num">1</span><span class="orb"></span>`);

define('inv-app', `
  :host{display:flex;flex-direction:column;height:100vh}
  main{display:flex;flex:1;min-height:0;border-top:1px solid #5f6770}
`, `<inv-titlebar></inv-titlebar><inv-tabs></inv-tabs><inv-ribbon></inv-ribbon><main><inv-browser></inv-browser><inv-canvas></inv-canvas></main><inv-status></inv-status>`);
</script>
</body>
</html>
